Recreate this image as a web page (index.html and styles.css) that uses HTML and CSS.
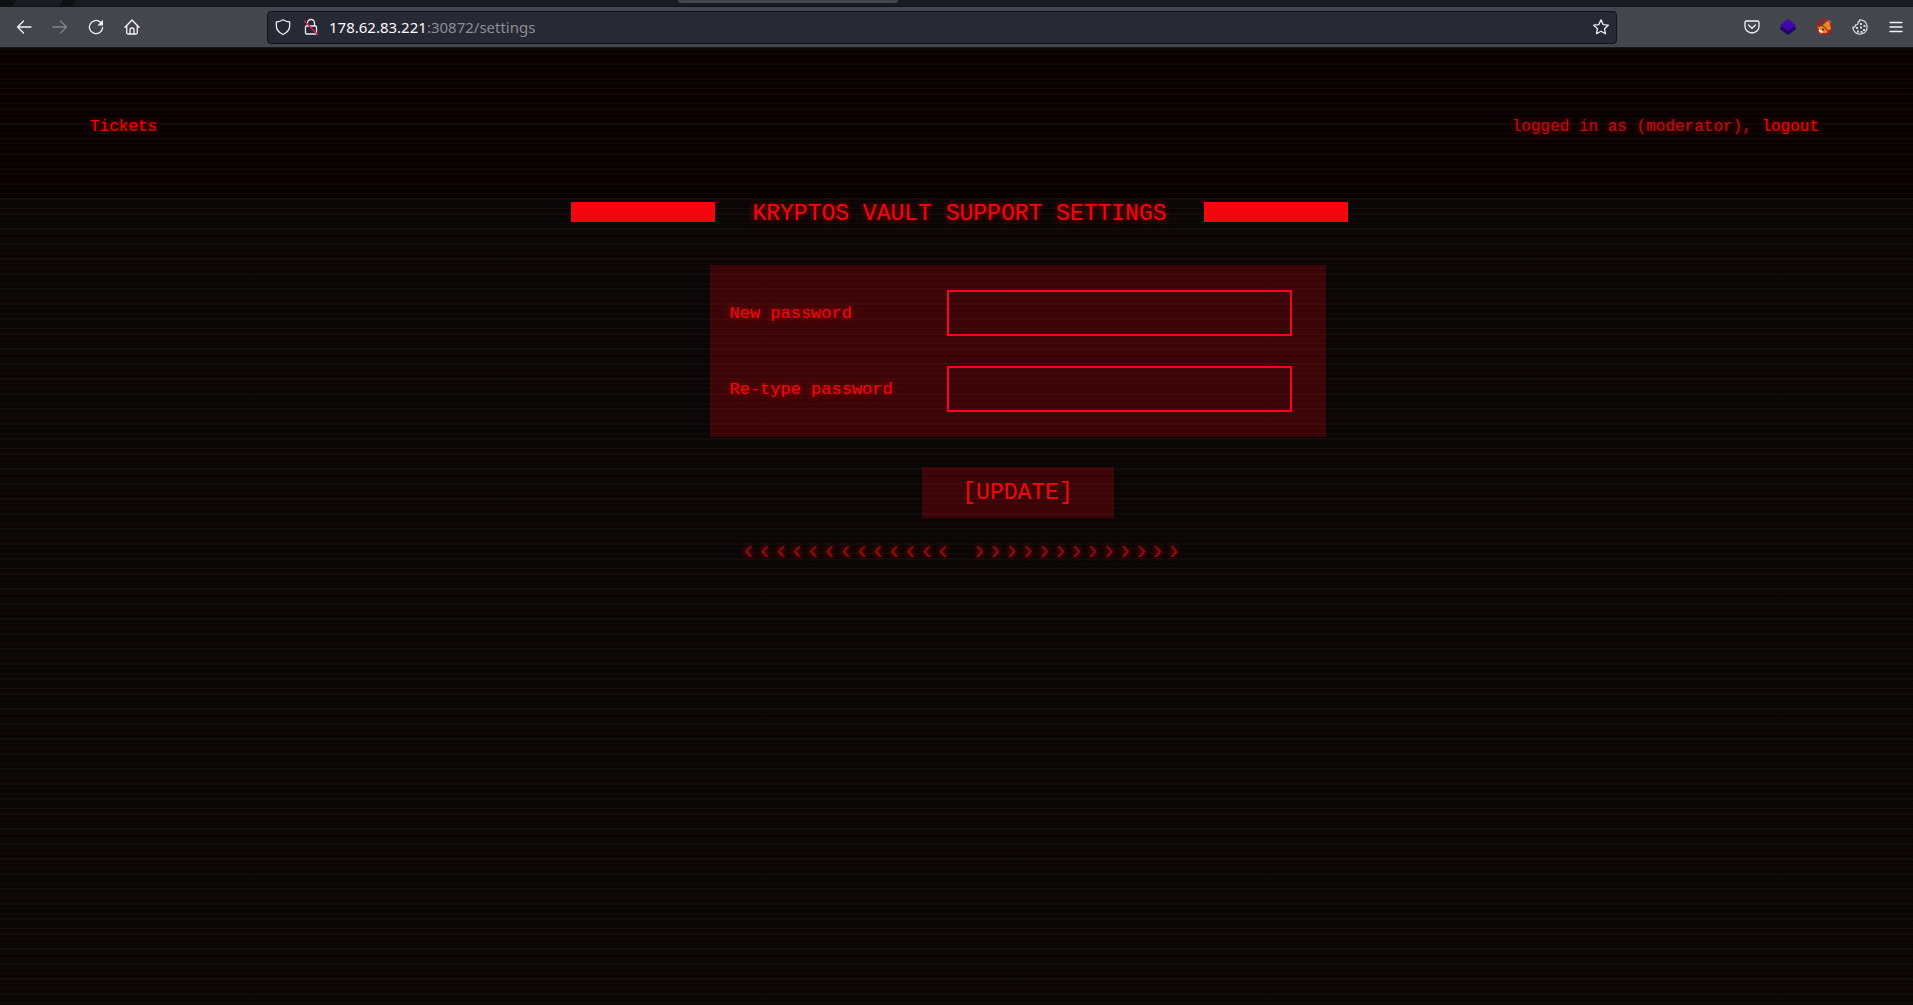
FILE: index.html
```html
<!DOCTYPE html>
<html lang="en">
<head>
<meta charset="utf-8">
<title>Kryptos Vault Support Settings</title>
<link rel="stylesheet" href="styles.css">
</head>
<body>
<div class="tabstrip"><span class="pattern"></span><span class="tab"></span></div>
<header class="toolbar">
  <nav class="nav-buttons" aria-label="Browser navigation">
    <button class="icon-btn" aria-label="Back"><svg viewBox="0 0 16 16"><path d="M15 8H1.500M7.500 2L1.500 8l6 6"/></svg></button>
    <button class="icon-btn dim" aria-label="Forward" disabled><svg viewBox="0 0 16 16"><path d="M1 8h13.500M8.500 2l6 6-6 6"/></svg></button>
    <button class="icon-btn" aria-label="Reload"><svg viewBox="0 0 16 16"><path d="M12.500 3.200A6.600 6.600 0 1 0 14.600 8.500"/><path class="solid" d="M15 .8v5.700H9.300z"/></svg></button>
    <button class="icon-btn" aria-label="Home"><svg viewBox="0 0 16 16"><path d="M1 8.300L8 1l7 7.300M2.700 7v6.500a1.500 1.500 0 0 0 1.500 1.500h7.600a1.500 1.500 0 0 0 1.500-1.500V7M6 15v-4a2 2 0 0 1 4 0v4"/></svg></button>
  </nav>
  <div class="urlbar">
    <svg viewBox="0 0 16 16"><path d="M8 .8C6 2.200 3.500 2.800 1.300 3v3.500c0 4.200 2.700 7.300 6.700 9 4-1.700 6.700-4.800 6.700-9V3C12.500 2.800 10 2.200 8 .8z"/></svg>
    <svg viewBox="0 0 16 16"><path d="M4.500 7V4a3.500 3.500 0 0 1 7 0v3M3.500 7h9a1 1 0 0 1 1 1v6a1 1 0 0 1-1 1h-9a1 1 0 0 1-1-1V8a1 1 0 0 1 1-1z"/><path class="slash" d="M1.500 2l13 13.500"/></svg>
    <p class="url"><b>178.62.83.221</b>:30872/settings</p>
    <svg viewBox="0 0 16 16"><path d="M8 .9l2.200 4.700 5.100.6-3.800 3.500 1 5.100L8 12.300l-4.500 2.500 1-5.100L.7 6.200l5.100-.6z"/></svg>
  </div>
  <div class="tools">
    <button class="icon-btn" aria-label="Pocket"><svg viewBox="0 0 16 16"><path d="M2.500 2h11A1.500 1.500 0 0 1 15 3.500V7.500a7 6.500 0 0 1-14 0V3.500A1.500 1.500 0 0 1 2.500 2zM4.500 6L8 9.200 11.500 6"/></svg></button>
    <button class="icon-btn" aria-label="Layers extension"><svg viewBox="0 0 16 16"><path class="layer-low" d="M0 9l2-2h12l2 2v1l-8 6-8-6z"/><path class="layer-top" d="M8 0l8 6-8 6-8-6z"/></svg></button>
    <button class="icon-btn" aria-label="Proxy extension"><svg viewBox="0 0 16 16"><path class="fox" d="M1 7l2.500 1L8 5l3-3 4 .5L14 9l-3 5-6 .5z"/><path class="white" d="M1 7l2 3-1 3 3 2.500 2-3-4-2.500zM11 1l3 1-1 3zM15 7l-2 4 2-1z"/><circle class="eye" cx="7" cy="10.500" r="1"/><path class="ban" d="M2.800 2.800l10.400 10.400"/><circle class="ban" cx="8" cy="8" r="7.300"/></svg></button>
    <button class="icon-btn" aria-label="Cookie extension"><svg viewBox="0 0 16 16"><path class="cookie" d="M7.500.8a7.200 7.200 0 1 1-6.700 7.400c1.700.3 3-.6 2.700-2.400C5.500 6 6.500 4.800 6 3.200 7 3 7.700 2 7.500.8z"/><path class="crumb" d="M8 4h2v2H8zM11.500 6h2v2h-2zM4 8h2v2H4zM8 7.500h2v2H8zM11 10h2v2h-2zM5 11.500h2v2H5zM8.500 12h2v2h-2z"/></svg></button>
    <button class="icon-btn" aria-label="Menu"><svg viewBox="0 0 16 16"><path d="M2 3.500h12M2 8h12M2 12.500h12"/></svg></button>
  </div>
</header>
<main class="page">
  <nav class="account">
    <a href="#tickets">Tickets</a>
    <p>logged in as (moderator), <a href="#logout">logout</a></p>
  </nav>
  <div class="vault">
    <div class="title-row"><span class="bar"></span><h1>KRYPTOS VAULT SUPPORT SETTINGS</h1><span class="bar"></span></div>
    <form class="settings">
      <div class="fields">
        <label for="pw">New password</label><input id="pw" type="password">
        <label for="pw2">Re-type password</label><input id="pw2" type="password">
      </div>
      <button class="update" type="button">[UPDATE]</button>
    </form>
    <div class="arrows"><span>‹‹‹‹‹‹‹‹‹‹‹‹‹</span><span>›››››››››››››</span></div>
  </div>
</main>
</body>
</html>
```
FILE: styles.css
```css
* { box-sizing: border-box; }
body {
  margin: 0;
  min-height: 100vh;
  display: flex;
  flex-direction: column;
  background: #080304;
  font-family: "Liberation Mono", monospace;
}
p, h1 { margin: 0; font-weight: 400; }
button { border: 0; padding: 0; background: none; font: inherit; }

/* Browser chrome */
.tabstrip {
  height: 7px;
  display: flex;
  justify-content: space-between;
  background: #1a1b20;
  border-bottom: 1px solid #121317;
}
.pattern {
  width: 80px;
  background: linear-gradient(125deg, #0f1014 14px, #1c1d22 14px 52px, #0f1014 52px 62px, #1a1b20 62px);
}
.tab {
  width: 220px;
  height: 3px;
  margin-right: 1015px;
  border-radius: 0 0 4px 4px;
  background: #44464d;
}
.toolbar {
  height: 41px;
  display: flex;
  align-items: center;
  padding: 0 9px 0 16px;
  background: #44464d;
  border-bottom: 1px solid #15171b;
}
.nav-buttons, .tools { flex: none; display: flex; gap: 20px; }
.nav-buttons { width: 251px; }
.tools { margin-left: auto; }
.icon-btn { width: 16px; height: 16px; display: block; color: #f4f4f6; }
.icon-btn.dim { color: #85868b; }
svg {
  display: block;
  width: 16px;
  height: 16px;
  overflow: visible;
  fill: none;
  stroke: currentColor;
  stroke-width: 1.3;
  stroke-linecap: round;
  stroke-linejoin: round;
}
.solid { fill: currentColor; stroke: none; }
.layer-low { fill: #21006b; stroke: none; }
.layer-top { fill: #4305b0; stroke: none; }
.fox { fill: #e8851c; stroke: none; }
.white { fill: #e9e5e0; stroke: none; }
.eye { fill: #2b2320; stroke: none; }
.ban { stroke: #cf1010; stroke-width: 1.2; }
.cookie { stroke: #d4d4d8; }
.crumb { fill: #d4d4d8; stroke: none; }
.slash { stroke: #e21a4b; stroke-width: 1.4; }
.urlbar {
  flex: 1;
  max-width: 1350px;
  height: 33px;
  display: flex;
  align-items: center;
  gap: 12px;
  padding: 0 7px;
  border: 1px solid #101218;
  border-radius: 4px;
  background: #272934;
  color: #ececf0;
}
.url {
  flex: 1;
  margin-left: -2px;
  color: #8d8e95;
  font: 15px/24px "Noto Sans", sans-serif;
}
.url b { color: #fbfbfe; font-weight: 400; }

/* Terminal page */
.page {
  flex: 1;
  color: #f4060f;
  background:
    repeating-linear-gradient(rgba(44, 26, 28, .28) 0 2px, transparent 2px 5px, rgba(44, 26, 28, .22) 5px 6px, transparent 6px 10px, rgba(44, 26, 28, .28) 10px 11px, transparent 11px 15px),
    linear-gradient(#080001 150px, #0a0606 150px);
  text-shadow: 0 0 6px rgba(255, 0, 0, .7);
}
.account {
  display: flex;
  justify-content: space-between;
  padding: 69px 94px 0 90px;
  color: #c20d14;
  font-size: 16px;
  line-height: 20px;
}
a { color: #f80000; text-decoration: none; }
.vault {
  width: 784px;
  margin: 59px auto 0;
  padding-left: 6px;
}
.title-row { display: flex; justify-content: space-between; align-items: flex-start; }
.bar { width: 144px; height: 20px; margin-top: 6px; background: #f4060f; }
h1 { font-size: 23px; line-height: 36px; }
.settings {
  display: flex;
  flex-direction: column;
  align-items: center;
  gap: 30px;
  margin: 33px 23px 0 139px;
}
.fields {
  width: 100%;
  display: grid;
  grid-template-columns: 1fr 345px;
  align-items: center;
  row-gap: 30px;
  padding: 25px 34px 25px 20px;
  background: rgba(244, 6, 15, .21);
  font-size: 17px;
}
input {
  width: 100%;
  height: 46px;
  border: 2px solid #f4061f;
  border-radius: 0;
  background: none;
  color: inherit;
  outline: 0;
}
.update {
  width: 192px;
  height: 51px;
  background: rgba(244, 6, 15, .21);
  color: #f4060f;
  font-size: 23px;
}
.arrows {
  display: flex;
  gap: 20px;
  margin: 18px 0 0 170px;
  color: #920a10;
  font-size: 27px;
  line-height: 32px;
}
```
